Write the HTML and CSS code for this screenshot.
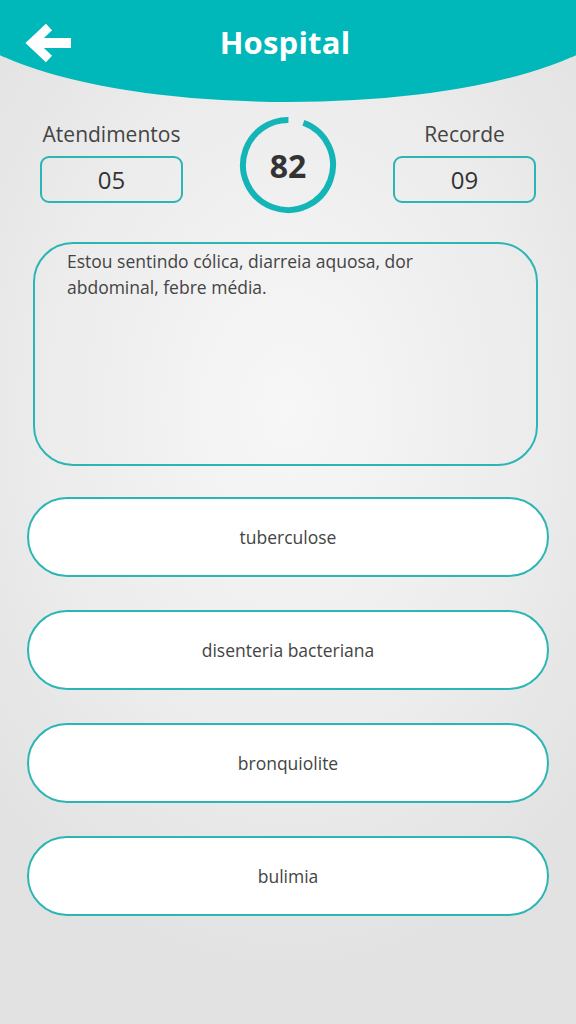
FILE: index.html
```html
<!DOCTYPE html>
<html lang="pt">
<head>
<meta charset="utf-8">
<link rel="stylesheet" href="styles.css">
</head>
<body>
<div class="screen">
  <header class="topbar">
    <div class="topbar-inner">
      <svg class="back" width="50" height="40" viewBox="0 0 50 40">
        <path d="M10 20 H46" stroke="#fff" stroke-width="10" fill="none"/>
        <path d="M24 4 L7 20 L24 36" stroke="#fff" stroke-width="9" fill="none" stroke-linejoin="miter"/>
      </svg>
      <h1 class="title">Hospital</h1>
      <span></span>
    </div>
  </header>

  <section class="stats">
    <div class="stat">
      <div class="stat-label">Atendimentos</div>
      <div class="stat-box">05</div>
    </div>
    <div class="timer">
      <svg width="100" height="100" viewBox="0 0 100 100">
        <circle cx="50" cy="50" r="45" fill="none" stroke="#13b5b6" stroke-width="6" stroke-dasharray="267 300" transform="rotate(-70 50 50)"/>
      </svg>
      <span class="timer-value">82</span>
    </div>
    <div class="stat">
      <div class="stat-label">Recorde</div>
      <div class="stat-box">09</div>
    </div>
  </section>

  <div class="question">Estou sentindo cólica, diarreia aquosa, dor abdominal, febre média.</div>

  <div class="options">
    <button class="option">tuberculose</button>
    <button class="option">disenteria bacteriana</button>
    <button class="option">bronquiolite</button>
    <button class="option">bulimia</button>
  </div>
</div>
</body>
</html>
```

FILE: styles.css
```css
* { box-sizing: border-box; }
html, body { margin: 0; padding: 0; }
body {
  width: 576px;
  height: 1024px;
  overflow: hidden;
  font-family: "Open Sans", "Noto Sans", sans-serif;
  background: radial-gradient(ellipse 70% 55% at 50% 40%, #f7f7f7 0%, #ececec 60%, #e2e2e2 100%);
  color: #3f3f3f;
}
.screen {
  display: flex;
  flex-direction: column;
  width: 576px;
  height: 1024px;
  overflow: hidden;
}
.topbar {
  margin: 0 -52px;
  height: 102px;
  background: #00b7b9;
  border-radius: 0 0 340px 340px / 0 0 100px 100px;
  padding: 0 52px;
  flex-shrink: 0;
}
.topbar-inner {
  display: grid;
  grid-template-columns: 1fr auto 1fr;
  align-items: center;
  height: 86px;
}
.back {
  margin-left: 25px;
  display: block;
}
.title {
  margin: -2px 6px 0 0;
  color: #fff;
  font-size: 31px;
  font-weight: 700;
  letter-spacing: 0.2px;
}
.stats {
  display: flex;
  justify-content: space-between;
  align-items: flex-start;
  padding: 0 40px;
  margin-top: 18px;
}
.stat {
  width: 143px;
  display: flex;
  flex-direction: column;
  align-items: center;
}
.stat-label {
  font-size: 21px;
  line-height: 28px;
  color: #444;
}
.stat-box {
  margin-top: 8px;
  width: 143px;
  height: 47px;
  border: 2px solid #2bb5b4;
  border-radius: 9px;
  display: flex;
  align-items: center;
  justify-content: center;
  font-size: 24px;
  font-weight: 500;
  color: #333;
}
.timer {
  position: relative;
  width: 100px;
  height: 100px;
  margin-top: -5px;
  display: flex;
  align-items: center;
  justify-content: center;
}
.timer svg { position: absolute; left: 0; top: 0; }
.timer-value {
  font-size: 32px;
  font-weight: 700;
  color: #333;
}
.question {
  margin: 27px 38px 0 33px;
  height: 224px;
  border: 2px solid #2bb5b4;
  border-radius: 40px;
  padding: 4px 40px 0 32px;
  font-size: 17.5px;
  line-height: 26px;
  color: #444;
}
.options {
  display: flex;
  flex-direction: column;
  gap: 33px;
  margin: 31px 27px 0 27px;
}
.option {
  height: 80px;
  background: #fff;
  border: 2px solid #2bb5b4;
  border-radius: 40px;
  font-family: inherit;
  font-size: 17.5px;
  color: #444;
  padding: 0;
}
```
